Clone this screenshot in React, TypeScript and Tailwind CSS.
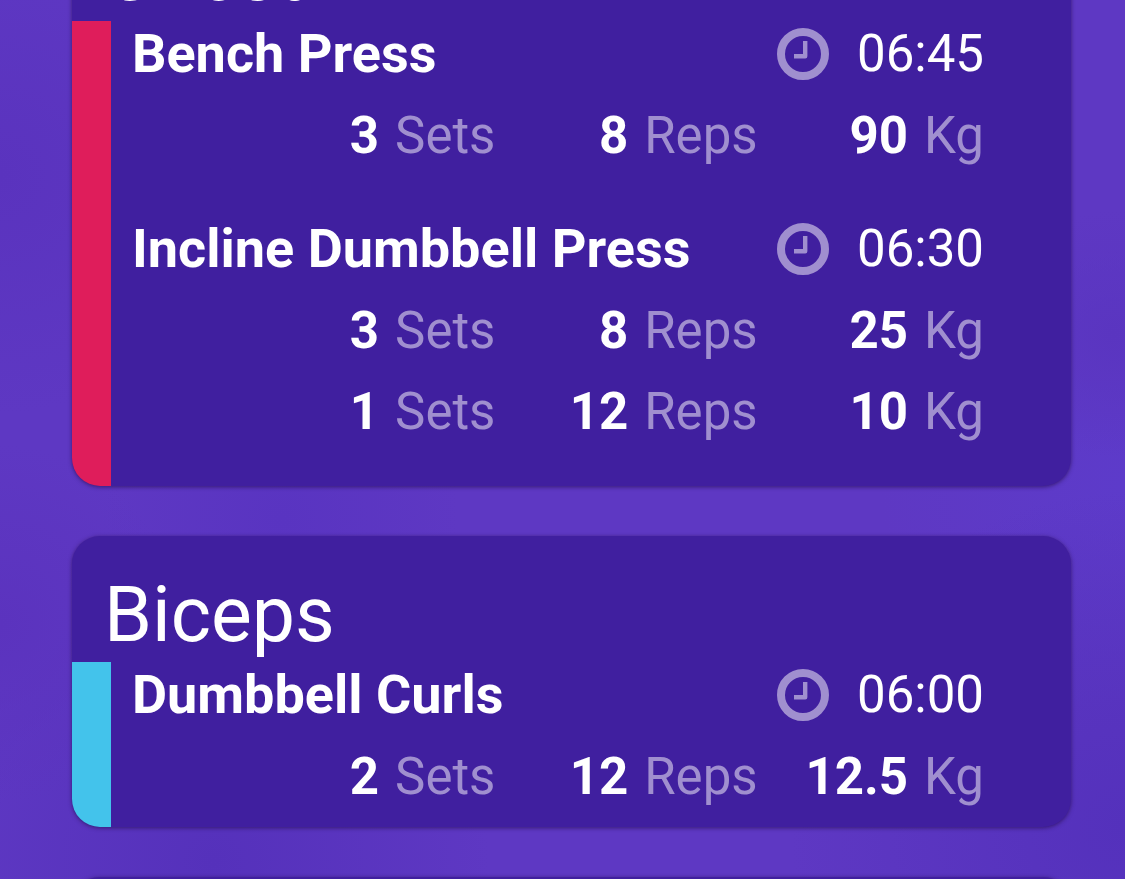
interface SetEntry {
  sets: number;
  reps: number;
  weight: number;
}

interface Exercise {
  name: string;
  duration: string;
  entries: SetEntry[];
}

interface MuscleGroup {
  name: string;
  accent: string;
  spacing: string;
  exercises: Exercise[];
}

const groups: MuscleGroup[] = [
  {
    name: "Chest",
    accent: "bg-[#df1d5b]",
    spacing: "pb-[34px]",
    exercises: [
      { name: "Bench Press", duration: "06:45", entries: [{ sets: 3, reps: 8, weight: 90 }] },
      {
        name: "Incline Dumbbell Press",
        duration: "06:30",
        entries: [
          { sets: 3, reps: 8, weight: 25 },
          { sets: 1, reps: 12, weight: 10 },
        ],
      },
    ],
  },
  {
    name: "Biceps",
    accent: "bg-[#43c3eb]",
    spacing: "pb-[10px]",
    exercises: [
      { name: "Dumbbell Curls", duration: "06:00", entries: [{ sets: 2, reps: 12, weight: 12.5 }] },
    ],
  },
];

function ClockIcon() {
  return (
    <svg viewBox="0 0 52 52" className="size-[52px] shrink-0 text-[#a08fcf]" fill="none" aria-hidden="true">
      <circle cx="26" cy="26" r="22" stroke="currentColor" strokeWidth="8" />
      <path d="M28.2 13v15.2H17" stroke="currentColor" strokeWidth="4.4" strokeLinejoin="round" />
    </svg>
  );
}

function Stat({ value, unit }: { value: number; unit: string }) {
  return (
    <span className="flex justify-end gap-4">
      <strong className="font-bold">{value}</strong>
      <span className="text-[#a08fcf]">{unit}</span>
    </span>
  );
}

function ExerciseItem({ exercise }: { exercise: Exercise }) {
  return (
    <li>
      <div className="flex items-center justify-between pb-2">
        <h3 className="text-[54px] leading-[66px] font-bold">{exercise.name}</h3>
        <div className="flex items-center gap-7">
          <ClockIcon />
          <time className="text-[51px] leading-[66px]">{exercise.duration}</time>
        </div>
      </div>
      <ul>
        {exercise.entries.map((entry, i) => (
          <li key={i} className="grid grid-cols-[61fr_44fr_38fr] text-[51px] leading-[81px]">
            <Stat value={entry.sets} unit="Sets" />
            <Stat value={entry.reps} unit="Reps" />
            <Stat value={entry.weight} unit="Kg" />
          </li>
        ))}
      </ul>
    </li>
  );
}

function GroupCard({ group }: { group: MuscleGroup }) {
  return (
    <section className="overflow-hidden rounded-[28px] bg-[#401f9f] shadow-[0_1px_4px_rgba(40,15,80,0.7)]">
      <h2 className="px-8 pt-[34px] pb-[2px] text-[77px] leading-[90px]">{group.name}</h2>
      <div className="flex">
        <div className={`w-[39px] shrink-0 ${group.accent}`} />
        <ul className={`flex grow flex-col gap-10 pr-[87px] pl-[21px] ${group.spacing}`}>
          {group.exercises.map((exercise) => (
            <ExerciseItem key={exercise.name} exercise={exercise} />
          ))}
        </ul>
      </div>
    </section>
  );
}

export default function App() {
  return (
    <div className="h-screen overflow-hidden bg-[#5e38c3] bg-[radial-gradient(circle_at_0%_20%,#5a33be,transparent_18%),radial-gradient(circle_at_0%_71%,#5b33be,transparent_14%),radial-gradient(circle_at_25%_59%,#5934c1,transparent_18%),radial-gradient(circle_at_19%_98%,#5531bb,transparent_22%),radial-gradient(circle_at_100%_94%,#5431bc,transparent_24%),radial-gradient(circle_at_99%_38%,#5a35c0,transparent_10%),radial-gradient(circle_at_100%_55%,#5d3bca,transparent_20%)] font-[Roboto,sans-serif] text-white">
      <main className="-mt-[105px] flex flex-col gap-[50px] pr-[54px] pl-[72px]">
        {groups.map((group) => (
          <GroupCard key={group.name} group={group} />
        ))}
        <section className="h-[291px] rounded-[28px] bg-[#401f9f] shadow-[0_1px_4px_rgba(40,15,80,0.7)]" />
      </main>
    </div>
  );
}
